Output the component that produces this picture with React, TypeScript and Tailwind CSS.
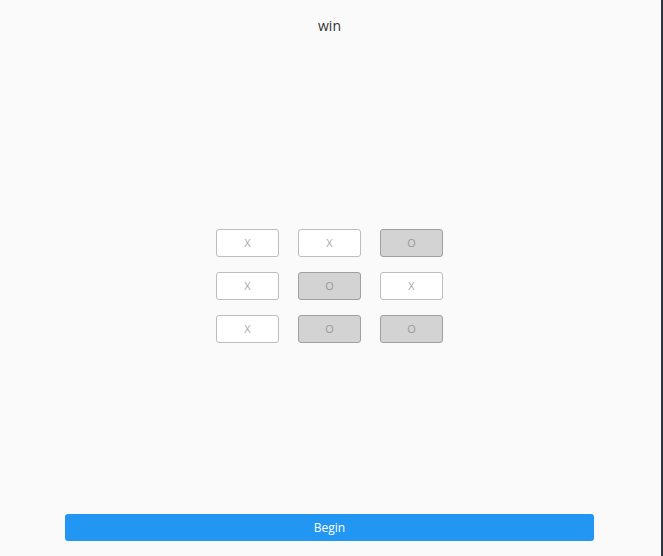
const board = ["X", "X", "O", "X", "O", "X", "X", "O", "O"];

export default function App() {
  return (
    <div className="flex h-[556px] w-[663px] bg-[#fafafa]" style={{ fontFamily: '"Open Sans", sans-serif' }}>
      <div className="flex flex-1 flex-col items-center pr-[2px]">
        <div className="mt-[16px] text-[14px] leading-[20px] text-[#333]">win</div>
        <div className="mt-[193px] grid grid-cols-[63px_63px_63px] gap-x-[19px] gap-y-[15px]">
          {board.map((v, i) => (
            <div
              key={i}
              className={
                v === "O"
                  ? "flex h-[28px] items-center justify-center rounded-[3px] border border-[#a0a0a0] bg-[#d3d3d3] text-[11px] text-[#999]"
                  : "flex h-[28px] items-center justify-center rounded-[3px] border border-[#bdbdbd] bg-white text-[11px] text-[#aaa]"
              }
            >
              {v}
            </div>
          ))}
        </div>
        <div className="mt-auto mb-[15px] w-full px-[65px]">
          <button className="flex h-[27px] w-full items-center justify-center rounded-[3px] bg-[#2196f3] text-[12px] text-white">
            Begin
          </button>
        </div>
      </div>
      <div className="w-[2px] bg-[#2e3440]" />
    </div>
  );
}
